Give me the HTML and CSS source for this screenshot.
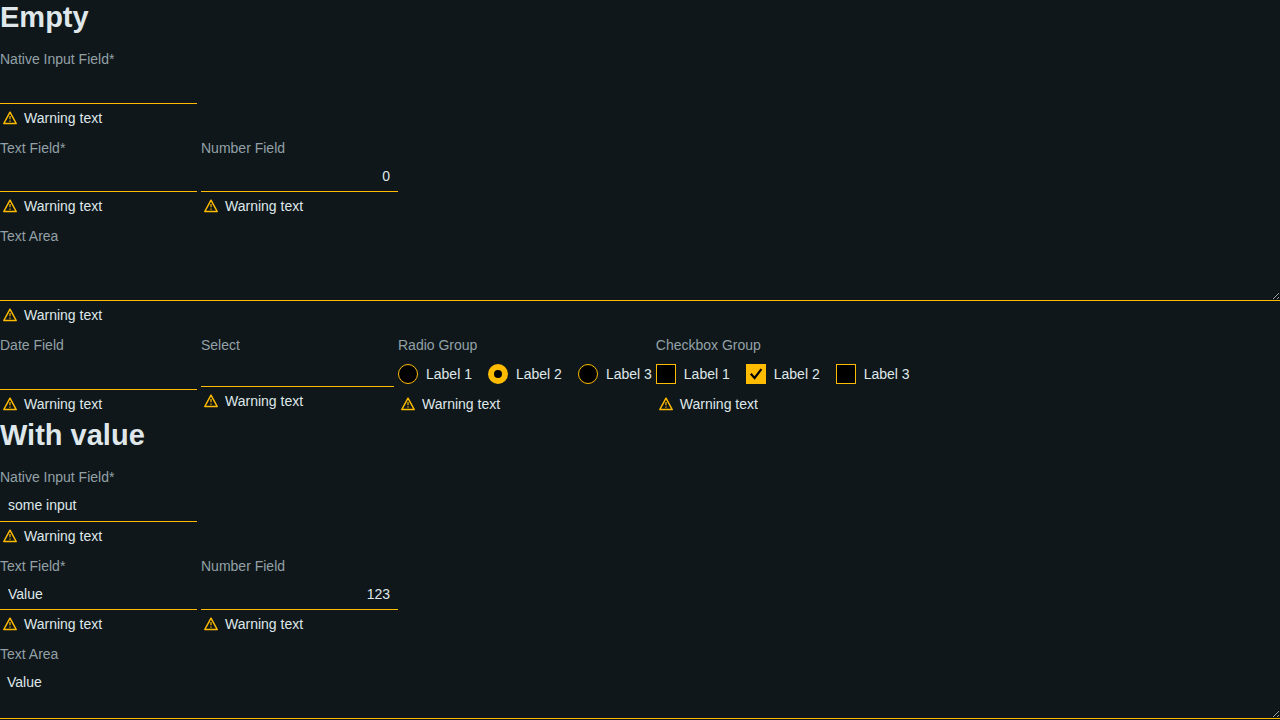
FILE: index.html
```html
<!DOCTYPE html>
<html lang="en">
<head>
<meta charset="utf-8">
<title>Form fields with warnings</title>
<link rel="stylesheet" href="styles.css">
</head>
<body>
<svg class="sprite" aria-hidden="true">
  <symbol id="warn" viewBox="0 0 20 20">
    <path d="M10 4.2 16.2 15.5H3.8Z" fill="none" stroke="currentColor" stroke-width="1.5" stroke-linejoin="round"/>
    <path d="M10 8v3.3M10 12.4v1.3" fill="none" stroke="currentColor" stroke-width="1.2"/>
  </symbol>
</svg>
<section>
  <h1>Empty</h1>
  <div class="row">
    <div class="field">
      <label for="n1">Native Input Field*</label>
      <input id="n1" class="input tall" type="text">
      <p class="warning"><svg><use href="#warn"/></svg>Warning text</p>
    </div>
  </div>
  <div class="row">
    <div class="field">
      <label for="t1">Text Field*</label>
      <input id="t1" class="input" type="text">
      <p class="warning"><svg><use href="#warn"/></svg>Warning text</p>
    </div>
    <div class="field">
      <label for="m1">Number Field</label>
      <input id="m1" class="input number" type="text" inputmode="numeric" value="0">
      <p class="warning"><svg><use href="#warn"/></svg>Warning text</p>
    </div>
  </div>
  <div class="row">
    <div class="field wide">
      <label for="a1">Text Area</label>
      <textarea id="a1" class="area"></textarea>
      <p class="warning"><svg><use href="#warn"/></svg>Warning text</p>
    </div>
  </div>
  <div class="row last">
    <div class="field">
      <label for="d1">Date Field</label>
      <input id="d1" class="input tall" type="text">
      <p class="warning"><svg><use href="#warn"/></svg>Warning text</p>
    </div>
    <div class="field">
      <label for="s1">Select</label>
      <select id="s1" class="select"><option></option></select>
      <p class="warning"><svg><use href="#warn"/></svg>Warning text</p>
    </div>
    <fieldset class="field">
      <legend>Radio Group</legend>
      <div class="options">
        <label class="option"><input type="radio" name="r1">Label 1</label>
        <label class="option"><input type="radio" name="r1" checked>Label 2</label>
        <label class="option"><input type="radio" name="r1">Label 3</label>
      </div>
      <p class="warning"><svg><use href="#warn"/></svg>Warning text</p>
    </fieldset>
    <fieldset class="field">
      <legend>Checkbox Group</legend>
      <div class="options">
        <label class="option"><input type="checkbox">Label 1</label>
        <label class="option"><span class="check"><input type="checkbox" checked><svg viewBox="0 0 20 20"><path d="M4.8 9.8 8.6 14 15.4 5.2" fill="none" stroke="#000" stroke-width="2.2"/></svg></span>Label 2</label>
        <label class="option"><input type="checkbox">Label 3</label>
      </div>
      <p class="warning"><svg><use href="#warn"/></svg>Warning text</p>
    </fieldset>
  </div>
</section>
<section>
  <h1>With value</h1>
  <div class="row">
    <div class="field">
      <label for="n2">Native Input Field*</label>
      <input id="n2" class="input tall" type="text" value="some input">
      <p class="warning"><svg><use href="#warn"/></svg>Warning text</p>
    </div>
  </div>
  <div class="row">
    <div class="field">
      <label for="t2">Text Field*</label>
      <input id="t2" class="input" type="text" value="Value">
      <p class="warning"><svg><use href="#warn"/></svg>Warning text</p>
    </div>
    <div class="field">
      <label for="m2">Number Field</label>
      <input id="m2" class="input number" type="text" inputmode="numeric" value="123">
      <p class="warning"><svg><use href="#warn"/></svg>Warning text</p>
    </div>
  </div>
  <div class="row last">
    <div class="field wide">
      <label for="a2">Text Area</label>
      <textarea id="a2" class="area">Value</textarea>
    </div>
  </div>
</section>
</body>
</html>
```
FILE: styles.css
```css
* { box-sizing: border-box; }
html { color-scheme: dark; }
body {
  margin: 0;
  background: #0f171a;
  color: #dfe7ea;
  font: 14px/24px "Liberation Sans", Arial, sans-serif;
}
.sprite { display: none; }
h1 { margin: 0; padding-bottom: 13px; font-size: 29px; line-height: 34px; }
.row { display: flex; gap: 4px; margin-bottom: 4px; }
.row.last { margin-bottom: 0; }
.field {
  display: flex;
  flex-direction: column;
  align-items: flex-start;
  min-width: 0;
  margin: 0;
  padding: 0;
  border: 0;
}
.field.wide { flex: 1; align-items: stretch; }
.field > label, legend { color: #93a1a7; padding: 0; line-height: 24px; }
.input, .select, .area {
  margin: 0;
  border: 0;
  border-bottom: 1px solid #ffbb00;
  border-radius: 0;
  outline: 0;
  background: transparent;
  color: inherit;
  font: inherit;
}
.input { width: 197px; height: 32px; padding: 0 8px; }
.input.tall { height: 33px; }
.number { text-align: right; }
.area { height: 53px; padding: 4px 7px; resize: vertical; }
.select { appearance: none; width: 193px; height: 30px; }
.warning {
  display: flex;
  align-items: center;
  gap: 4px;
  height: 28px;
  margin: 0;
}
.warning svg { width: 20px; height: 20px; color: #ffbb00; }
.options { display: flex; gap: 16px; height: 33px; align-items: flex-start; }
.option { display: flex; align-items: center; gap: 8px; height: 34px; }
.option input {
  appearance: none;
  flex: none;
  width: 20px;
  height: 20px;
  margin: 0;
  border: 1px solid #ffbb00;
  background: #000;
}
.option input[type="radio"] { border-radius: 50%; }
.option input[type="radio"]:checked { border-width: 6px; }
.option input[type="checkbox"]:checked { background: #ffbb00; }
.check { position: relative; display: flex; }
.check svg { position: absolute; inset: 0; }
```
